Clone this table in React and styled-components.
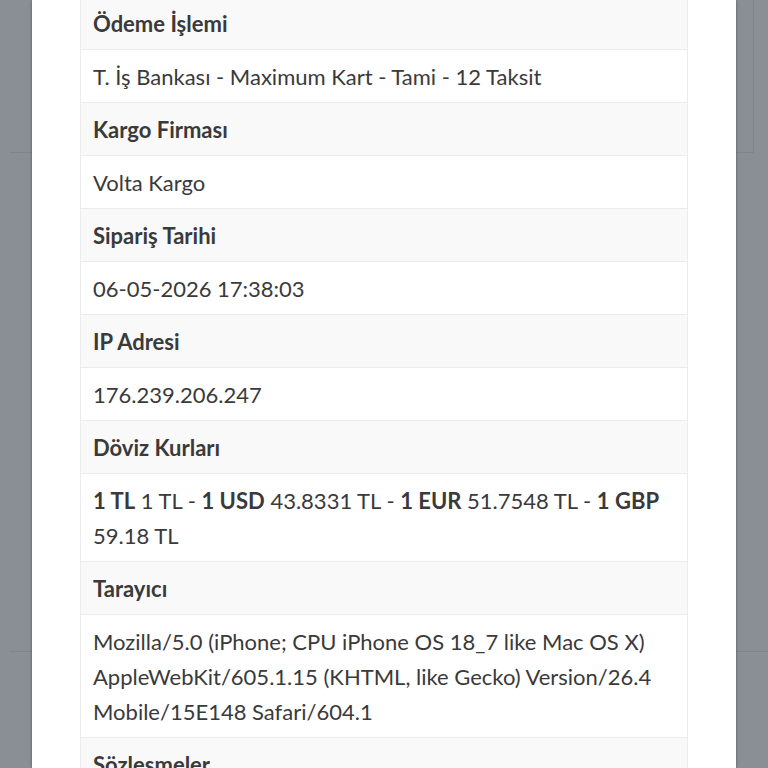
import React from "react";
import styled, { createGlobalStyle } from "styled-components";

const Global = createGlobalStyle`
  html, body { margin: 0; padding: 0; background: #8a8e95; overflow: hidden; }
  body { font-family: Lato, "Noto Sans", sans-serif; }
`;

const Page = styled.div`
  width: 768px;
  height: 768px;
  display: flex;
  flex-direction: column;
  gap: 498px;
`;

const BackPanel = styled.div`
  height: 152px;
  margin: 0 14px 0 10px;
  border-bottom: 1px solid #80848b;
  border-right: 1px solid #80848b;
`;

const BackPanelLower = styled.div`
  flex: 1;
  margin: 0 0 0 10px;
  border-top: 1px solid #80848b;
`;

const Overlay = styled.div`
  position: fixed;
  inset: 0;
  display: flex;
  justify-content: center;
  overflow: hidden;
`;

const Modal = styled.div`
  width: 704px;
  background: #ffffff;
  box-shadow: 0 0 3px rgba(0, 0, 0, 0.35);
  padding: 0 48px;
  box-sizing: border-box;
`;

const Table = styled.div`
  margin-top: -4px;
  border-left: 1px solid #ececec;
  border-right: 1px solid #ececec;
  display: flex;
  flex-direction: column;
`;

const Row = styled.div`
  padding: 9px 12px 8px;
  border-top: 1px solid #ececec;
  background: ${(p) => (p.$head ? "#f9f9f9" : "#ffffff")};
  color: #3a3a3a;
  font-size: 22px;
  line-height: 35px;
  font-weight: ${(p) => (p.$head ? 700 : 400)};
`;

const B = styled.b`
  font-weight: 700;
`;

const rows = [
  ["Ödeme İşlemi", "T. İş Bankası - Maximum Kart - Tami - 12 Taksit"],
  ["Kargo Firması", "Volta Kargo"],
  ["Sipariş Tarihi", "06-05-2026 17:38:03"],
  ["IP Adresi", "176.239.206.247"],
];

export default function App() {
  return (
    <>
      <Global />
      <Page>
        <BackPanel />
        <BackPanelLower />
      </Page>
      <Overlay>
        <Modal>
          <Table>
            {rows.map(([h, v]) => (
              <React.Fragment key={h}>
                <Row $head>{h}</Row>
                <Row>{v}</Row>
              </React.Fragment>
            ))}
            <Row $head>Döviz Kurları</Row>
            <Row>
              <B>1 TL</B> 1 TL - <B>1 USD</B> 43.8331 TL - <B>1 EUR</B> 51.7548 TL - <B>1 GBP</B> 59.18 TL
            </Row>
            <Row $head>Tarayıcı</Row>
            <Row>
              Mozilla/5.0 (iPhone; CPU iPhone OS 18_7 like Mac OS X) AppleWebKit/605.1.15 (KHTML, like Gecko) Version/26.4 Mobile/15E148 Safari/604.1
            </Row>
            <Row $head>Sözleşmeler</Row>
            <Row>&nbsp;</Row>
          </Table>
        </Modal>
      </Overlay>
    </>
  );
}
